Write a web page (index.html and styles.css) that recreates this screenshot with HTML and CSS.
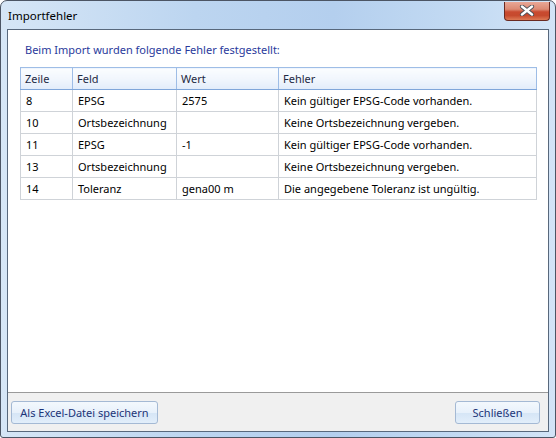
FILE: index.html
```html
<!DOCTYPE html>
<html lang="de">
<head>
<meta charset="utf-8">
<title>Importfehler</title>
<link rel="stylesheet" href="styles.css">
</head>
<body>
<div class="window">
  <div class="titlebar">
    <span class="title">Importfehler</span>
    <div class="close">
      <svg width="16" height="11" viewBox="0 0 16 11">
        <path d="M3 1.5 L13 9.5 M13 1.5 L3 9.5" stroke="#4a4f57" stroke-width="4.2" stroke-linecap="round" fill="none"/>
        <path d="M3 1.5 L13 9.5 M13 1.5 L3 9.5" stroke="#ffffff" stroke-width="2.4" stroke-linecap="round" fill="none"/>
      </svg>
    </div>
  </div>
  <div class="client">
    <div class="content">
      <p class="instruction">Beim Import wurden folgende Fehler festgestellt:</p>
      <table class="grid">
        <colgroup>
          <col class="c1"><col class="c2"><col class="c3"><col class="c4">
        </colgroup>
        <thead>
          <tr><th>Zeile</th><th>Feld</th><th>Wert</th><th>Fehler</th></tr>
        </thead>
        <tbody>
          <tr><td>8</td><td>EPSG</td><td>2575</td><td>Kein gültiger EPSG-Code vorhanden.</td></tr>
          <tr><td>10</td><td>Ortsbezeichnung</td><td></td><td>Keine Ortsbezeichnung vergeben.</td></tr>
          <tr><td>11</td><td>EPSG</td><td>-1</td><td>Kein gültiger EPSG-Code vorhanden.</td></tr>
          <tr><td>13</td><td>Ortsbezeichnung</td><td></td><td>Keine Ortsbezeichnung vergeben.</td></tr>
          <tr><td>14</td><td>Toleranz</td><td>gena00 m</td><td>Die angegebene Toleranz ist ungültig.</td></tr>
        </tbody>
      </table>
    </div>
    <div class="footer">
      <button class="btn btn-excel">Als Excel-Datei speichern</button>
      <button class="btn btn-close">Schließen</button>
    </div>
  </div>
</div>
</body>
</html>
```

FILE: styles.css
```css
html, body {
  margin: 0;
  padding: 0;
  background: #ffffff;
}
body {
  font-family: "Segoe UI", "Noto Sans", "Open Sans", sans-serif;
  font-size: 11px;
}
.window {
  width: 556px;
  height: 438px;
  box-sizing: border-box;
  border: 1px solid #4c5564;
  border-radius: 7px 7px 3px 3px;
  background: linear-gradient(to right, #d6e6f6 0%, #bcd5f0 35%, #b4cfee 60%, #c4dbf3 85%, #d3e4f7 100%);
  display: flex;
  flex-direction: column;
  padding: 0 6px 5px 6px;
  overflow: hidden;
}
.titlebar {
  height: 28px;
  display: flex;
  align-items: center;
  justify-content: space-between;
}
.title {
  color: #000000;
  padding-left: 1px;
  font-size: 11.5px;
}
.close {
  width: 46px;
  height: 19px;
  margin-top: -8px;
  margin-right: -1px;
  box-sizing: border-box;
  border: 1px solid #6a2a22;
  border-top: none;
  border-radius: 0 0 4px 4px;
  background: linear-gradient(to bottom, #e9a796 0%, #dc8a74 40%, #c94a30 55%, #c64a2e 75%, #dd7a55 100%);
  display: flex;
  align-items: center;
  justify-content: center;
}
.client {
  flex: 1;
  border: 1px solid #58687c;
  background: #ffffff;
  display: flex;
  flex-direction: column;
}
.content {
  flex: 1;
  padding: 0 12px;
}
.instruction {
  margin: 12px 0 0 5px;
  color: #2a3a9c;
  line-height: 16px;
}
.grid {
  margin-top: 9px;
  border-collapse: collapse;
  table-layout: fixed;
  width: 516px;
  color: #000000;
}
.c1 { width: 52px; }
.c2 { width: 104px; }
.c3 { width: 102px; }
.c4 { width: 258px; }
.grid tr {
  height: 22px;
}
.grid th {
  padding: 0 0 0 4px;
  text-align: left;
  font-weight: normal;
  color: #1e2a44;
  background: linear-gradient(to bottom, #fbfdff 0%, #f1f6fd 50%, #e2ecfa 100%);
  border: 1px solid #9ebde6;
  border-bottom: 1px solid #7fa6da;
}
.grid td {
  padding: 0 0 0 5px;
  border: 1px solid #cfd3d8;
  white-space: nowrap;
}
.footer {
  height: 38px;
  border-top: 1px solid #9a9a9a;
  background: #f0f0f0;
  display: flex;
  align-items: center;
  justify-content: space-between;
  padding: 0 8px 0 3px;
}
.btn {
  height: 23px;
  font-family: inherit;
  font-size: 11px;
  color: #1c3478;
  border: 1px solid #a4b9d4;
  border-radius: 3px;
  background: linear-gradient(to bottom, #f3f8fd 0%, #e8f1fb 50%, #d5e5f6 51%, #e2eefa 100%);
  padding: 0;
  white-space: nowrap;
}
.btn-excel { width: 147px; }
.btn-close { width: 85px; }
```
